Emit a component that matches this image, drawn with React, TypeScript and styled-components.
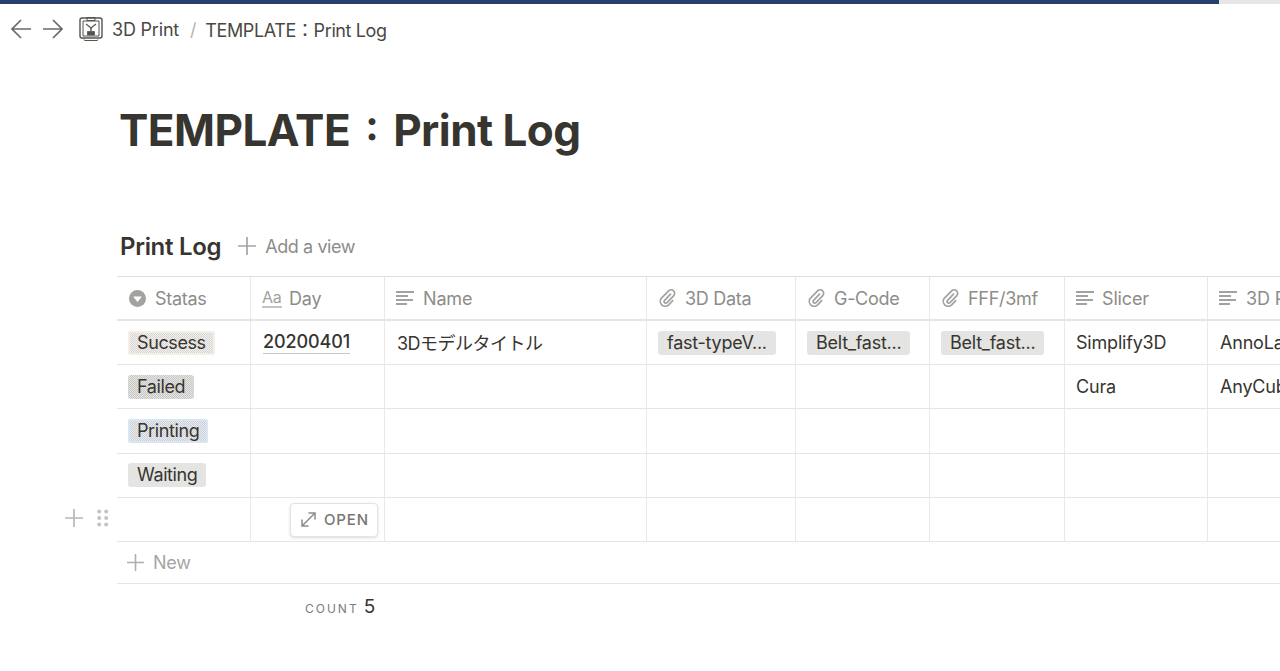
import React from "react";
import styled, { createGlobalStyle } from "styled-components";

const Global = createGlobalStyle`
	html, body {
		margin: 0;
		height: 100%;
		background: #fff;
		overflow: hidden;
	}
	body {
		font-family: Inter, "Noto Sans CJK JP", sans-serif;
		color: #37352f;
	}
`;

const Page = styled.div`
	position: relative;
	width: 1280px;
	height: 671px;
	overflow: hidden;
`;

const Progress = styled.div`
	height: 4px;
	background: #e6e6e4;
`;

const ProgressFill = styled.div`
	width: 1219px;
	height: 4px;
	background: #24406b;
`;

const TopBar = styled.div`
	display: flex;
	align-items: center;
	height: 50px;
	padding-left: 11px;
	font-size: 18px;
	letter-spacing: -0.2px;
`;

const NavButton = styled.svg`
	width: 20px;
	height: 20px;
	margin-right: 12px;
`;

const Crumb = styled.span`
	color: #4a4843;
`;

const PageCrumb = styled(Crumb)`
	letter-spacing: -0.38px;
`;

const Slash = styled.span`
	margin: 0 9px 0 11px;
	color: #b5b4b1;
`;

const PrinterIcon = styled.svg`
	width: 26px;
	height: 26px;
	margin: 0 8px 0 3px;
`;

const Title = styled.h1`
	margin: 40px 0 0 119px;
	font-size: 44px;
	line-height: 72px;
	font-weight: 700;
	letter-spacing: -0.55px;
	color: #37352f;
`;

const TitleColon = styled.span`
	display: inline-block;
	width: 43px;
	text-align: center;
	font-size: 32px;
	font-weight: 900;
	line-height: 72px;
	vertical-align: top;
`;

const ViewBar = styled.div`
	display: flex;
	align-items: center;
	height: 40px;
	margin: 60px 0 0 120px;
`;

const ViewTitle = styled.div`
	font-size: 24px;
	font-weight: 600;
	letter-spacing: -0.3px;
`;

const AddView = styled.div`
	display: flex;
	align-items: center;
	gap: 9px;
	margin-left: 17px;
	font-size: 18px;
	letter-spacing: -0.42px;
	color: #8d8c88;
`;

const Table = styled.div`
	margin: 10px 0 0 117px;
	width: 1300px;
	border-top: 1px solid #dededc;
`;

const Row = styled.div<{ $header?: boolean; $heavy?: boolean }>`
	display: grid;
	grid-template-columns: 134px 134px 262px 149px 134px 135px 143px 210px;
	height: ${(p) => (p.$header ? "42px" : "43.2px")};
	border-bottom: ${(p) => (p.$heavy ? "2px" : "1px")} solid #e5e5e3;
`;

const Cell = styled.div`
	display: flex;
	align-items: center;
	gap: 9px;
	min-width: 0;
	padding: 0 12px;
	border-right: 1px solid #e9e9e7;
	font-size: 18px;
	letter-spacing: -0.2px;
	white-space: nowrap;
	overflow: hidden;
	color: #37352f;
`;

const HeadCell = styled(Cell)`
	padding-left: 11px;
	color: #8d8c88;
	letter-spacing: -0.15px;
`;

const IconHeadCell = styled(HeadCell)`
	padding-left: 12px;
	letter-spacing: -0.3px;
`;

const SlicerHeadCell = styled(HeadCell)`
	gap: 8px;
`;

const HoverCell = styled(Cell)`
	position: relative;
	overflow: visible;
`;

const Pill = styled.span`
	display: inline-block;
	padding: 0 9px;
	height: 24px;
	line-height: 24px;
	border-radius: 3px;
	background: #e4e4e3;
	color: #37352f;
`;

/* the reference's coloured tags are dithered, so they get a 1px checker */
const StatusPill = styled(Pill)<{ $dark?: string; $light?: string; $edge?: string }>`
	letter-spacing: -0.4px;
	background: ${(p) =>
		p.$dark ? `repeating-conic-gradient(${p.$dark} 0 25%, ${p.$light} 0 50%) 0 0 / 2px 2px` : "#e4e4e3"};
	box-shadow: ${(p) => (p.$edge ? `inset 0 0 0 2px ${p.$edge}` : "none")};
`;

const FilePill = styled(Pill)`
	letter-spacing: -0.25px;
`;

const StatusCell = styled(Cell)`
	padding-left: 11px;
`;

const DayText = styled.span`
	font-weight: 500;
	border-bottom: 1px solid #c9c8c6;
	line-height: 22px;
	letter-spacing: -0.1px;
`;

const NameText = styled.span`
	margin-bottom: 2px;
	letter-spacing: -0.52px;
`;

const FileCell = styled(Cell)`
	padding-left: 11px;
`;

const TitleMark = styled.span`
	width: 20px;
	margin-right: -2px;
	font-size: 16px;
	line-height: 17px;
	letter-spacing: -0.2px;
	color: #a3a2a0;
	border-bottom: 2px solid #c4c3c1;
`;

const OpenButton = styled.div`
	position: absolute;
	top: 5px;
	right: 6px;
	display: flex;
	align-items: center;
	gap: 8px;
	box-sizing: border-box;
	width: 88px;
	height: 34px;
	padding-left: 10px;
	background: #fff;
	border: 1px solid #e3e3e1;
	border-radius: 4px;
	box-shadow: 0 1px 3px rgba(15, 15, 15, 0.14);
	font-size: 15px;
	font-weight: 500;
	letter-spacing: 0.85px;
	color: #777673;
`;

const RowHandles = styled.div`
	position: absolute;
	left: 65px;
	top: 509px;
	display: flex;
	align-items: center;
	gap: 14px;
`;

const NewRow = styled.div`
	display: flex;
	align-items: center;
	gap: 9px;
	height: 41px;
	padding-left: 10px;
	border-bottom: 1px solid #e5e5e3;
	font-size: 18px;
	letter-spacing: -0.3px;
	color: #a6a5a2;
`;

const CountRow = styled.div`
	display: flex;
	align-items: baseline;
	height: 46px;
	padding: 11px 0 0 188px;
	box-sizing: border-box;
`;

const CountLabel = styled.span`
	font-size: 12px;
	letter-spacing: 2px;
	color: #7c7b77;
`;

const CountValue = styled.span`
	margin-left: 5px;
	font-size: 19px;
	color: #37352f;
`;

function DotsIcon() {
	const dots = [];
	for (const cy of [2.5, 9, 15.5]) {
		for (const cx of [2.2, 9.2]) {
			dots.push(<circle key={`${cx}-${cy}`} cx={cx} cy={cy} r="2" fill="#c4c3c1" />);
		}
	}
	return <svg width="12" height="18" viewBox="0 0 12 18">{dots}</svg>;
}

function PlusIcon({ size, color }: { size: number; color: string }) {
	return (
		<svg width={size} height={size} viewBox="0 0 18 18" fill="none" stroke={color} strokeWidth="1.7">
			<path d="M0 9h18M9 0v18" />
		</svg>
	);
}

function SelectIcon() {
	return (
		<svg width="17" height="17" viewBox="0 0 18 18">
			<circle cx="9" cy="9" r="9" fill="#a3a2a0" />
			<path d="M4.4 6.8h9.2L9 12.8z" fill="#fff" />
		</svg>
	);
}

function TextIcon() {
	return (
		<svg width="18" height="14" viewBox="0 0 18 14" fill="#a3a2a0">
			<rect x="0" y="0" width="18" height="2" />
			<rect x="0" y="4" width="12" height="2" />
			<rect x="0" y="8" width="17" height="2" />
			<rect x="0" y="12" width="11" height="2" />
		</svg>
	);
}

function ClipIcon() {
	return (
		<svg width="17" height="18" viewBox="0 0 17 18" fill="none" stroke="#a3a2a0" strokeWidth="1.7" strokeLinecap="round">
			<path d="M11.5 5.2 5.6 11.3a1.7 1.7 0 0 0 2.4 2.4l6.6-6.9a3.5 3.5 0 0 0-5-5L2.7 8.8a4.9 4.9 0 0 0 7 7l4-4.2" />
		</svg>
	);
}

function ExpandIcon() {
	return (
		<svg width="15" height="15" viewBox="0 0 15 15" fill="none" stroke="#8d8c88" strokeWidth="1.5">
			<path d="M1.5 13.5 13.5 1.5M7.5 1h6.5v6.5M1 7.5V14h6.5" />
		</svg>
	);
}

function Printer() {
	return (
		<PrinterIcon viewBox="0 0 26 26" fill="none" stroke="#55534f">
			<rect x="2" y="2" width="22" height="20" rx="2" strokeWidth="1.4" />
			<path d="M5 5h16v15H5z" strokeWidth="1" />
			<path d="M9 1.5h8v3H9z" strokeWidth="1" />
			<path d="M8 8l5 4 5-4" strokeWidth="1.2" />
			<path d="M13 12v3" strokeWidth="1.4" />
			<path d="M9.5 15.5h7V19h-7z" fill="#55534f" strokeWidth="0.8" />
			<path d="M6 23.5c0 1 1 1 1 1h12s1 0 1-1" strokeWidth="1" />
		</PrinterIcon>
	);
}

const fileColumns = ["3D Data", "G-Code", "FFF/3mf"];

const rows = [
	{ status: "Sucsess", dark: "#d6d5d3", light: "#f3f1ed", edge: "#f4efe6", slicer: "Simplify3D", printer: "AnnoLa" },
	{ status: "Failed", dark: "#c8c8c7", light: "#e4e4e3", slicer: "Cura", printer: "AnyCub" },
	{ status: "Printing", dark: "#ccd0d5", light: "#e8ecf0", edge: "#d8e6f4", slicer: "", printer: "" },
	{ status: "Waiting", slicer: "", printer: "" },
];

export default function App() {
	return (
		<Page>
			<Global />
			<Progress>
				<ProgressFill />
			</Progress>
			<TopBar>
				<NavButton viewBox="0 0 20 20" fill="none" stroke="#6b6a66" strokeWidth="1.7">
					<path d="M20 10H1M10 1l-9 9 9 9" />
				</NavButton>
				<NavButton viewBox="0 0 20 20" fill="none" stroke="#6b6a66" strokeWidth="1.7">
					<path d="M0 10h19M10 1l9 9-9 9" />
				</NavButton>
				<Printer />
				<Crumb>3D Print</Crumb>
				<Slash>/</Slash>
				<PageCrumb>TEMPLATE：Print Log</PageCrumb>
			</TopBar>

			<Title>TEMPLATE<TitleColon>：</TitleColon>Print Log</Title>

			<ViewBar>
				<ViewTitle>Print Log</ViewTitle>
				<AddView>
					<PlusIcon size={18} color="#a6a5a2" />
					Add a view
				</AddView>
			</ViewBar>

			<Table>
				<Row $header $heavy>
					<IconHeadCell><SelectIcon />Statas</IconHeadCell>
					<HeadCell><TitleMark>Aa</TitleMark>Day</HeadCell>
					<HeadCell><TextIcon />Name</HeadCell>
					{fileColumns.map((name) => (
						<IconHeadCell key={name}><ClipIcon />{name}</IconHeadCell>
					))}
					<SlicerHeadCell><TextIcon />Slicer</SlicerHeadCell>
					<HeadCell><TextIcon />3D Printer</HeadCell>
				</Row>
				{rows.map((row, i) => (
					<Row key={row.status}>
						<StatusCell>
							<StatusPill $dark={row.dark} $light={row.light} $edge={row.edge}>{row.status}</StatusPill>
						</StatusCell>
						<Cell>{i === 0 && <DayText>20200401</DayText>}</Cell>
						<Cell>{i === 0 && <NameText>3Dモデルタイトル</NameText>}</Cell>
						<FileCell>{i === 0 && <FilePill>fast-typeV...</FilePill>}</FileCell>
						<FileCell>{i === 0 && <FilePill>Belt_fast...</FilePill>}</FileCell>
						<FileCell>{i === 0 && <FilePill>Belt_fast...</FilePill>}</FileCell>
						<FileCell>{row.slicer}</FileCell>
						<Cell>{row.printer}</Cell>
					</Row>
				))}
				<Row>
					<Cell />
					<HoverCell>
						<OpenButton>
							<ExpandIcon />
							OPEN
						</OpenButton>
					</HoverCell>
					<Cell />
					<Cell />
					<Cell />
					<Cell />
					<Cell />
					<Cell />
				</Row>
				<NewRow>
					<PlusIcon size={17} color="#b0afad" />
					New
				</NewRow>
				<CountRow>
					<CountLabel>COUNT</CountLabel>
					<CountValue>5</CountValue>
				</CountRow>
			</Table>

			<RowHandles>
				<PlusIcon size={18} color="#b9b8b6" />
				<DotsIcon />
			</RowHandles>
		</Page>
	);
}
